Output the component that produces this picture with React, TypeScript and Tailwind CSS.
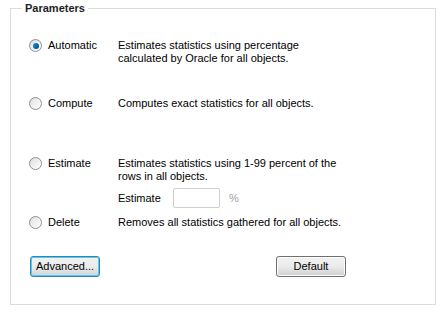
import React, { useState } from 'react';

type Mode = 'automatic' | 'compute' | 'estimate' | 'delete';

const Radio: React.FC<{ checked: boolean; label: string; onSelect: () => void }> = ({ checked, label, onSelect }) => (
  <label className="flex items-center self-start h-[13px] w-[89px] shrink-0 cursor-default" onClick={onSelect}>
    <span className="w-[13px] h-[13px] rounded-full border border-[#8e8f8f] bg-gradient-to-br from-[#d6d6d6] via-[#f4f4f4] to-[#ffffff] flex items-center justify-center shrink-0">
      <span className="w-[9px] h-[9px] rounded-full bg-gradient-to-br from-[#e3e3e3] to-[#fbfbfb] flex items-center justify-center">
        {checked && (
          <span className="w-[6px] h-[6px] rounded-full bg-gradient-to-br from-[#1b8fd6] via-[#0f6fb4] to-[#063f75]" />
        )}
      </span>
    </span>
    <span className="ml-[6px]">{label}</span>
  </label>
);

const WinButton: React.FC<{ children: React.ReactNode; focused?: boolean }> = ({ children, focused }) => (
  <button
    className={
      focused
        ? 'w-[70px] h-[21px] rounded-[3px] border border-[#3c7fb1] bg-gradient-to-b from-[#f2f2f2] via-[#ebebeb] to-[#d4d4d4] text-black leading-[19px] shadow-[inset_0_0_0_1px_#48d0f6]'
        : 'w-[70px] h-[21px] rounded-[3px] border border-[#707070] bg-gradient-to-b from-[#f2f2f2] via-[#ebebeb] to-[#cfcfcf] text-black leading-[19px] shadow-[inset_0_0_0_1px_#fcfcfc]'
    }
  >
    {children}
  </button>
);

const App: React.FC = () => {
  const [mode, setMode] = useState<Mode>('automatic');

  return (
    <div className="w-[444px] h-[313px] bg-white pt-[2px] px-[10px] text-[11px] leading-[13px] text-black font-['Liberation_Sans','Tahoma',sans-serif]">
      <fieldset className="border border-[#dcdcdc] w-[426px] h-[303px] pl-[18px] pr-2 m-0">
        <legend className="-ml-[7px] px-[3px] font-bold text-[#1e1e1e]">Parameters</legend>

        <div className="mt-[24px] h-[58px] flex">
          <Radio checked={mode === 'automatic'} label="Automatic" onSelect={() => setMode('automatic')} />
          <div>
            <div>Estimates statistics using percentage</div>
            <div>calculated by Oracle for all objects.</div>
          </div>
        </div>

        <div className="h-[60px] flex">
          <Radio checked={mode === 'compute'} label="Compute" onSelect={() => setMode('compute')} />
          <div>Computes exact statistics for all objects.</div>
        </div>

        <div className="flex">
          <Radio checked={mode === 'estimate'} label="Estimate" onSelect={() => setMode('estimate')} />
          <div>
            <div>Estimates statistics using 1-99 percent of the</div>
            <div>rows in all objects.</div>
          </div>
        </div>
        <div className="flex items-center mt-[5px] ml-[89px] h-[20px]">
          <span className="w-[55px]">Estimate</span>
          <input
            type="text"
            disabled={mode !== 'estimate'}
            className="w-[47px] h-[20px] border border-[#cfcfcf] rounded-[2px] bg-white outline-none"
          />
          <span className="ml-[9px] text-[#a0a0a0]">%</span>
        </div>

        <div className="flex mt-[8px]">
          <Radio checked={mode === 'delete'} label="Delete" onSelect={() => setMode('delete')} />
          <div>Removes all statistics gathered for all objects.</div>
        </div>

        <div className="flex mt-[27px]">
          <div className="ml-[1px]">
            <WinButton focused>Advanced...</WinButton>
          </div>
          <div className="ml-[176px]">
            <WinButton>Default</WinButton>
          </div>
        </div>
      </fieldset>
    </div>
  );
};

export default App;
